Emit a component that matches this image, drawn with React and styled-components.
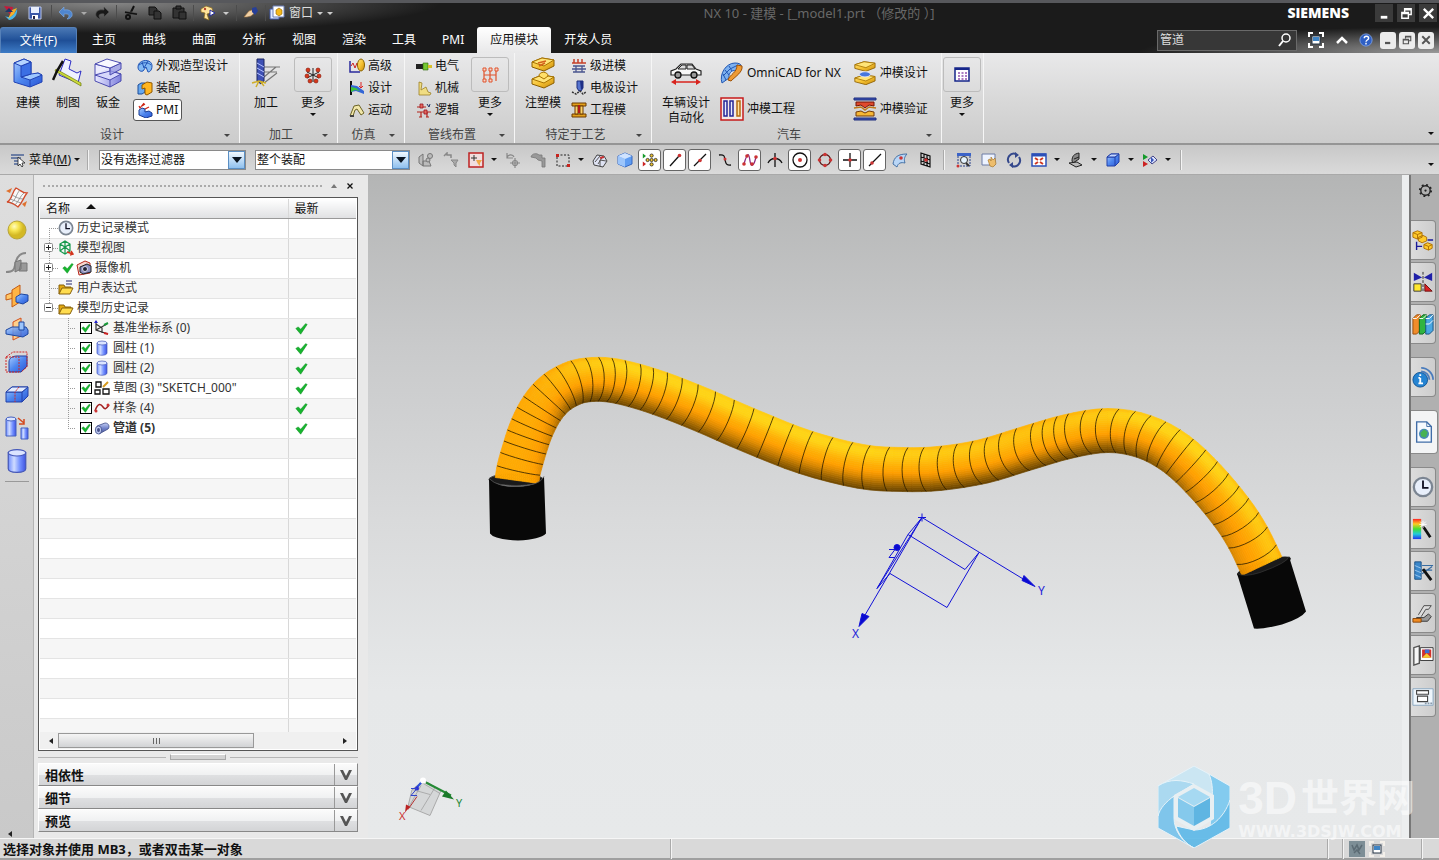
import React, { useState } from 'react';
import styled, { createGlobalStyle, css } from 'styled-components';

const GlobalStyle = createGlobalStyle`
  * {
    box-sizing: border-box;
  }

  body {
    margin: 0;
    font-family: 'Noto Sans', 'Noto Sans CJK SC', sans-serif;
    font-size: 12px;
    line-height: 16px;
    color: #111;
  }

  button, input, select {
    font: inherit;
    color: inherit;
  }
`;

const Page = styled.div`
  position: relative;
  display: flex;
  flex-direction: column;
  height: 100vh;
  overflow: hidden;
  background: #d6d6d6;
`;

const PlainButton = styled.button`
  display: flex;
  align-items: center;
  justify-content: center;
  padding: 0;
  border: none;
  background: none;
  white-space: nowrap;
`;

const Svg = styled.svg`
  display: block;
  flex: none;
`;

const Caret = styled.span`
  flex: none;
  width: 0;
  height: 0;
  border: 3px solid transparent;
  border-top-color: ${(p) => p.$color || '#111'};
  border-bottom-width: 0;
`;

/* Title bar and tabs */

const TopArea = styled.header`
  flex: none;
  color: #fff;
  border-top: 3px solid #57585c;
  background:
    radial-gradient(ellipse 330px 30px at 110px 0, #858585, transparent),
    radial-gradient(ellipse 300px 26px at 100% 100%, #9a9a9a, transparent),
    #1b1b1b;
`;

const TitleBar = styled.div`
  display: flex;
  align-items: center;
  height: 20px;
`;

const QuickAccess = styled.div`
  display: flex;
  align-items: center;
  flex: 7;
`;

const Slot = styled(PlainButton)`
  flex: none;
  width: ${(p) => p.$w || 22}px;
  height: 20px;
`;

const DarkRule = styled.span`
  width: 1px;
  height: 16px;
  margin: 0 3px;
  background: #4c4c4c;
`;

const WindowMenu = styled(PlainButton)`
  gap: 4px;
  color: #ddd;
`;

const AppTitle = styled.h1`
  margin: 0;
  font-size: 13px;
  font-weight: 400;
  color: #686868;
  white-space: pre;
`;

const TitleRight = styled.div`
  display: flex;
  align-items: center;
  justify-content: flex-end;
  flex: 5;
  gap: 4px;
  padding-right: 2px;
`;

const Brand = styled.strong`
  margin-right: 22px;
  font-family: 'Open Sans', sans-serif;
  font-size: 14px;
  font-weight: 800;
`;

const WindowButton = styled(PlainButton)`
  width: 18px;
  height: 18px;
  background: #3b3b3b;
`;

const TabBar = styled.nav`
  display: flex;
  align-items: flex-end;
  height: 30px;
`;

const Tab = styled(PlainButton)`
  height: 26px;
  padding: 0 13px;
  ${(p) => p.$active && css`
    color: #111;
    border-radius: 3px 3px 0 0;
    background: linear-gradient(#fff, #e8e8e9);
  `}
`;

const FileTab = styled(PlainButton)`
  width: 77px;
  height: 26px;
  margin-right: 2px;
  border: 1px solid #5580b8;
  border-bottom: none;
  border-radius: 3px 3px 0 0;
  background: linear-gradient(#4a78b4, #1f4f97 50%, #3e7cc6);
`;

const TabTools = styled.div`
  display: flex;
  align-items: center;
  height: 26px;
  margin-left: auto;
  padding-right: 5px;
`;

const SearchBox = styled.label`
  display: flex;
  align-items: center;
  width: 140px;
  height: 21px;
  margin-right: 6px;
  padding: 0 3px 0 2px;
  border: 1px solid #6a6a6a;
  background: #373737;
`;

const SearchInput = styled.input`
  flex: 1;
  min-width: 0;
  padding: 0;
  border: none;
  outline: none;
  color: #ddd;
  background: none;
`;

const DocButton = styled(PlainButton)`
  width: 16px;
  height: 17px;
  margin-left: 3px;
  border-radius: 3px;
  color: #555;
  background: #ececec;
`;

/* Ribbon */

const Ribbon = styled.section`
  display: flex;
  flex: none;
  height: 92px;
  border-bottom: 2px solid #959595;
  background: linear-gradient(#e9e9ea, #d9d9d9 50%, #cccccc);
`;

const Group = styled.div`
  display: flex;
  flex-direction: column;
  flex: none;
  width: ${(p) => p.$w}px;
  border-right: 1px solid #f6f6f6;
`;

const GroupBody = styled.div`
  display: flex;
  flex: 1;
  gap: ${(p) => p.$gap || 0}px;
  padding: 2px 0 0 ${(p) => p.$left || 8}px;
`;

const GroupFooter = styled.div`
  display: flex;
  align-items: center;
  height: 16px;
  padding-right: 9px;
  color: #444;
`;

const GroupTitle = styled.span`
  flex: 1;
  text-align: center;
`;

const BigButton = styled(PlainButton)`
  flex-direction: column;
  justify-content: flex-start;
  width: ${(p) => p.$w || 40}px;
  padding-top: 2px;
  gap: ${(p) => p.$gap || 6}px;
  align-self: flex-start;
  white-space: normal;
  line-height: 15px;
`;

const MoreFrame = styled.span`
  display: flex;
  align-items: center;
  justify-content: center;
  width: 38px;
  height: 35px;
  border: 1px solid #bcbcbc;
  border-radius: 3px;
`;

const SmallList = styled.div`
  display: flex;
  flex-direction: column;
  align-items: flex-start;
  justify-content: ${(p) => (p.$wide ? 'space-around' : 'flex-start')};
  margin-left: ${(p) => p.$left || 0}px;
`;

const SmallButton = styled(PlainButton)`
  height: 22px;
  gap: 3px;
  padding: 0 3px;
  border: 1px solid transparent;
  ${(p) => p.$pressed && css`
    border-color: #555;
    border-radius: 3px;
    background: #fff;
  `}
`;

/* Selection bar */

const SelectionBar = styled.section`
  display: flex;
  align-items: center;
  flex: none;
  height: 30px;
  padding-left: 10px;
  border-bottom: 1px solid #a9a9a9;
  background: linear-gradient(#c8c8c8, #dadada);
`;

const MenuButton = styled(PlainButton)`
  gap: 3px;
  width: 71px;
  justify-content: flex-start;
`;

const Rule = styled.span`
  flex: none;
  width: 2px;
  height: 20px;
  margin: 0 ${(p) => p.$gap || 6}px;
  border-left: 1px solid #aaa;
  background: #f4f4f4;
`;

const MenuRule = styled(Rule)`
  margin: 0 10px 0 6px;
`;

const SelectFrame = styled.span`
  position: relative;
  display: flex;
  flex: none;
  width: ${(p) => p.$w}px;
  height: 20px;
  margin-right: ${(p) => p.$right}px;
`;

const FilterSelect = styled.select`
  appearance: none;
  width: 100%;
  padding: 0 18px 0 1px;
  border: 1px solid #8a8a8a;
  background: #fff;
`;

const SelectArrow = styled.span`
  position: absolute;
  top: 1px;
  right: 1px;
  display: flex;
  align-items: center;
  justify-content: center;
  width: 17px;
  height: 18px;
  border: 1px solid #5b8fc4;
  background: linear-gradient(#f1f8fe, #8fc0ee);
  pointer-events: none;
`;

const ToolCell = styled(PlainButton)`
  flex: none;
  width: ${(p) => p.$w || 25}px;
  height: 24px;
`;

const ToolFrame = styled.span`
  display: flex;
  align-items: center;
  justify-content: center;
  width: 23px;
  height: 22px;
  ${(p) => p.$on && css`
    border: 1px solid #666;
    border-radius: 3px;
    background: #fff;
  `}
`;

const CornerCaret = styled.span`
  display: flex;
  align-items: flex-end;
  align-self: stretch;
  margin-left: auto;
  padding: 0 5px 8px 0;
`;

/* Work area */

const WorkArea = styled.main`
  display: flex;
  flex: 1;
  min-height: 0;
  background: #e9e9e9;
`;

const LeftTools = styled.aside`
  display: flex;
  flex-direction: column;
  flex: none;
  width: 34px;
  padding-top: 5px;
  border-right: 1px solid #b4b4b4;
  background: linear-gradient(#dedede, #c9c9c9);
`;

const LeftTool = styled(PlainButton)`
  height: 33px;
`;

const ToolEnd = styled.hr`
  width: 24px;
  margin: 4px auto;
  border: none;
  border-top: 1px solid #999;
`;

const CollapseMark = styled(PlainButton)`
  margin: auto 14px 0 0;
`;

const Navigator = styled.section`
  display: flex;
  flex-direction: column;
  flex: none;
  width: 334px;
  padding: 0 10px 6px 4px;
`;

const GripBar = styled.div`
  display: flex;
  align-items: center;
  gap: 9px;
  height: 22px;
  padding: 0 4px 0 5px;
`;

const Grip = styled.span`
  flex: 1;
  border-top: 2px dotted #aaa;
`;

const CollapseCaret = styled(Caret)`
  border-width: 0 3px 4px;
  border-bottom-color: #777;
`;

const TreeFrame = styled.div`
  display: flex;
  flex-direction: column;
  flex: 1;
  min-height: 0;
  padding: 1px;
  border: 1px solid #555;
  background: #fff;
`;

const TreeClip = styled.div`
  flex: 1;
  min-height: 0;
  overflow: hidden;
`;

const TreeTable = styled.table`
  width: 100%;
  table-layout: fixed;
  border-collapse: collapse;

  th {
    height: 19px;
    padding: 2px 6px 0;
    font-weight: 400;
    text-align: left;
    line-height: 14px;
    border-bottom: 1px solid #999;
    background: linear-gradient(#fff, #e0e1e3);
  }

  td {
    height: 20px;
    padding: 0;
    border-bottom: 1px solid #e4e4e4;
  }

  th + th, td + td {
    width: 68px;
    padding-left: 6px;
    border-left: 1px solid #d8d8d8;
  }

  tbody tr:nth-child(even) {
    background: #f6f6f6;
  }
`;

const SortMark = styled.span`
  display: inline-block;
  margin: 0 0 4px 16px;
  border: 5px solid transparent;
  border-top-width: 0;
  border-bottom-color: #111;
`;

const NodeLine = styled.label`
  display: flex;
  align-items: center;
  height: 19px;
  color: #333;
  white-space: nowrap;
  font-weight: ${(p) => (p.$bold ? 700 : 400)};
`;

const NodeText = styled.span`
  margin-left: 3px;
`;

const TickFrame = styled.span`
  position: relative;
  display: flex;
  flex: none;
  margin: 0 2px 0 4px;
`;

const NodeCheck = styled.input`
  appearance: none;
  width: 12px;
  height: 12px;
  margin: 0;
  border: 1px solid #000;
  background: #fff;
`;

const Tick = styled.span`
  position: absolute;
  top: 1px;
  left: 1px;
  pointer-events: none;
`;

const ScrollRow = styled.div`
  display: flex;
  align-items: center;
  flex: none;
  height: 17px;
  padding: 0 4px;
  background: #f0f0f0;
`;

const ScrollArrow = styled(PlainButton)`
  width: 14px;
`;

const ScrollTrack = styled.div`
  flex: 1;
`;

const ScrollThumb = styled.div`
  display: flex;
  align-items: center;
  justify-content: center;
  width: 70%;
  height: 15px;
  border: 1px solid #999;
  background: linear-gradient(#f5f5f5, #d2d3d5);
`;

const Splitter = styled.div`
  display: flex;
  align-items: center;
  gap: 4px;
  flex: none;
  height: 12px;

  &::before, &::after {
    content: '';
    flex: 1;
    border-top: 1px solid #b5b5b5;
  }
`;

const SplitterGrip = styled.span`
  width: 56px;
  height: 6px;
  border: 1px solid #a8a8a8;
  border-top-color: #fff;
  background: #d3d3d3;
`;

const Section = styled(PlainButton)`
  flex: none;
  justify-content: space-between;
  height: 23px;
  padding-left: 6px;
  border: 1px solid #fff;
  border-right-color: #888;
  border-bottom-color: #888;
  font-size: 13px;
  font-weight: 700;
  background: linear-gradient(#fbfbfb, #f0f1f2 50%, #dfe0e2 52%, #d3d4d6);
`;

const SectionArrow = styled.span`
  display: flex;
  align-items: center;
  justify-content: center;
  width: 23px;
  height: 21px;
  border-left: 1px solid #999;
`;

const Viewport = styled.section`
  display: flex;
  flex: 1;
  min-width: 0;
  border-right: 7px solid #eceeef;
  background: linear-gradient(#b4b5b5, #c9cacb 26%, #d9dadb 52%, #e6e8e9 78%, #e7e9ea);
`;

const Scene = styled.svg`
  display: block;
  flex: 1;
  min-width: 0;
  height: 100%;
`;

const ResourceBar = styled.aside`
  display: flex;
  flex-direction: column;
  align-items: flex-start;
  flex: none;
  gap: 2px;
  width: 30px;
  border-left: 2px solid #777;
  background: #b0b0b0;
`;

const GearButton = styled(PlainButton)`
  width: 28px;
  height: 30px;
  margin-bottom: 13px;
`;

const ResourceTab = styled(PlainButton)`
  width: ${(p) => (p.$active ? 27 : 25)}px;
  height: ${(p) => (p.$active ? 44 : 40)}px;
  margin-top: ${(p) => (p.$apart ? 11 : 0)}px;
  border: 1px solid #8a8a8a;
  border-left: none;
  border-radius: 0 4px 4px 0;
  background: ${(p) => (p.$active ? '#f3f4f5' : 'linear-gradient(90deg, #dcdcdc, #cdcdcd)')};
`;

const StatusBar = styled.footer`
  display: flex;
  align-items: center;
  flex: none;
  height: 22px;
  padding-left: 3px;
  border-top: 1px solid #f6f6f6;
  border-bottom: 2px solid #a0a0a0;
  background: #d9d9d9;
  font-size: 13px;
  font-weight: 700;
`;

const StatusText = styled.span`
  width: 46%;
  white-space: nowrap;
`;

const StatusRight = styled.div`
  display: flex;
  align-items: center;
  gap: 4px;
  margin-left: auto;
`;

const EndRule = styled(Rule)`
  margin: 0 16px 0 32px;
`;

const Watermark = styled.div`
  position: absolute;
  right: 24px;
  bottom: 12px;
  display: flex;
  align-items: center;
  gap: 8px;
  color: rgba(255, 255, 255, 0.55);
  font-weight: 700;
  pointer-events: none;
`;

const WatermarkName = styled.div`
  display: flex;
  align-items: center;
  height: 50px;
  gap: 4px;
  font-family: 'Liberation Sans', 'Noto Sans CJK SC', sans-serif;
  font-size: 38px;
  line-height: 40px;
`;

const WatermarkDigits = styled.span`
  font-size: 46px;
`;

const WatermarkUrl = styled.div`
  font-family: 'DejaVu Sans', sans-serif;
  font-size: 16px;
  line-height: 18px;
`;

/* Icons: [viewBox size, drawing] */

const check = <path d="M1 8l3-2 3 3 6-7 2 1-8 12z" fill="#17b52f" stroke="#0b8a1e" strokeWidth=".6" />;
const box = (
  <>
    <path d="M2 5l4-3h8v8l-4 4H2z" fill="url(#blue)" stroke="#2340a8" />
    <path d="M2 5h8v9M10 5l4-3" fill="none" stroke="#2340a8" />
    <path d="M2 5l4-3h8l-4 3z" fill="#c3d6ff" stroke="#2340a8" />
  </>
);
const cylinder = (
  <>
    <path d="M3 3v10c0 3 10 3 10 0V3z" fill="url(#cyl)" stroke="#4457b8" strokeWidth=".7" />
    <ellipse cx="8" cy="3" rx="5" ry="2" fill="#dbe4ff" stroke="#4457b8" strokeWidth=".7" />
  </>
);
const folder = (
  <>
    <path d="M1 14V5h5l1 2h6v2" fill="#e3a910" stroke="#86600a" />
    <path d="M1 14l3-6h11l-3 6z" fill="#ffdc4f" stroke="#86600a" />
  </>
);
const fullscreen = (c) => (
  <>
    <path d="M1 5V1h4M11 1h4v4M15 11v4h-4M5 15H1v-4" fill="none" stroke={c} strokeWidth="2" />
    <rect x="4" y="4" width="8" height="8" fill="#fff" stroke="#234" />
    <path d="M5 5h6v4H5z" fill="#3f84c4" />
  </>
);
const lshape = (
  <>
    <path d="M2 6l10-4 7 3v13l7-2 4 2v7L18 30 2 25z" fill="url(#blue)" stroke="#2142b4" />
    <path d="M9 20l10-3 7-1 4 2-12 5z" fill="#9cc6ff" stroke="#2142b4" />
    <path d="M9 9l10-4v12L9 20z" fill="#3b6fe4" stroke="#2142b4" />
    <path d="M2 6l10-4 7 3-10 4z" fill="#b4d4ff" stroke="#2142b4" />
    <path d="M18 23v7" stroke="#2142b4" />
  </>
);
const plate = (y) => (
  <>
    <path d={`M2 ${y + 4}l10-4 12 2v6l-10 5-12-4z`} fill="url(#gold)" stroke="#8b5e00" />
    <path d={`M2 ${y + 4}l12 4 10-6-12-2z`} fill="#ffe478" stroke="#a87300" />
  </>
);

const icons = {
  logo: [16, <><path d="M1 1l9 1-2 9z" fill="#c51a3b" /><path d="M2 11c5 3 9-1 12-7 1 5-3 11-8 11z" fill="#49b6e8" /><path d="M9 5l5-2-3 6-6 5z" fill="#f3b12a" /><path d="M2 7l4-4 4 4" fill="#1d3768" /></>],
  save: [16, <><path d="M2 2h12v12H2z" fill="#3a57a8" stroke="#b8c6ea" /><path d="M4 2h8v6H4z" fill="#e8eefc" /><path d="M5 10h6v4H5z" fill="#fff" /><path d="M6 11h2v3H6z" fill="#224" /></>],
  undo: [16, <path d="M1 7l5-5v3c6-1 9 2 8 6-1 2-3 3-5 3 3-2 3-6-3-5v3z" fill="#4f86cf" stroke="#85aee4" strokeWidth=".6" />],
  redo: [16, <path d="M15 7l-5-5v3C4 4 1 7 2 11c1 2 3 3 5 3-3-2-3-6 3-5v3z" fill="#191919" stroke="#555" strokeWidth=".6" />],
  cut: [16, <><path d="M11 1L7 9M2 7l12 2" stroke="#111" strokeWidth="2" /><circle cx="5" cy="12" r="2" fill="none" stroke="#111" strokeWidth="2" /><path d="M2 6l12 2" stroke="#777" strokeWidth=".5" /></>],
  copy: [16, <g fill="#333" stroke="#111"><path d="M2 2h6l2 2v6H2z" /><path d="M7 6h5l2 2v6H7z" /></g>],
  paste: [16, <g fill="#333" stroke="#111"><path d="M2 3h11v10H2z" /><path d="M5 1h5v3H5zM8 7h7v7H8z" /></g>],
  palette: [16, <><path d="M1 4l5-3 6 2 1 4-6 2 2 6-5-2 1-5-4-1z" fill="#ffe49a" stroke="#8b6b1d" strokeWidth=".7" /><path d="M10 5l5 3-5 3z" fill="#fff" stroke="#222a9c" /><circle cx="5" cy="4" r="1.2" fill="#b6442d" /></>],
  touch: [16, <><path d="M1 12l5-6 6-2 2 2-6 5-4 1z" fill="#f1d0a4" stroke="#9a6f3d" strokeWidth=".6" /><path d="M9 3l4-1 2 4-3 4-3-3z" fill="#273f98" /></>],
  windows: [16, <><path d="M1 4h9v10H1z" fill="#dbe7ff" stroke="#4059a8" /><path d="M4 1h11v11H4z" fill="#fff" stroke="#6a7eb8" /><path d="M7 5l3-2 3 2v4l-3 2-3-2z" fill="#f5b81c" stroke="#8b5e00" strokeWidth=".6" /></>],
  minimize: [16, <path d="M4 12h7" stroke="currentColor" strokeWidth="3" />],
  restore: [16, <path d="M6 6V3h7v6h-3M3 7h7v6H3zM3 8h7M6 4h7" fill="none" stroke="currentColor" strokeWidth="1.5" />],
  close: [16, <path d="M3 3l10 10M13 3L3 13" stroke="currentColor" strokeWidth="2.5" />],
  search: [16, <><circle cx="9" cy="6" r="4" fill="none" stroke="#fff" strokeWidth="1.5" /><path d="M6 9l-4 5" stroke="#fff" strokeWidth="2" /></>],
  fullscreen: [16, fullscreen('#fff')],
  fullscreenDark: [16, fullscreen('#f4f0ea')],
  chevron: [16, <path d="M3 11l5-5 5 5" fill="none" stroke="#fff" strokeWidth="2.5" />],
  help: [16, <><circle cx="8" cy="8" r="7" fill="#2e5fc4" stroke="#7da0e4" /><path d="M6 6c0-3 5-3 5 0 0 2-3 2-3 4M8 11v2" fill="none" stroke="#fff" strokeWidth="1.6" /></>],
  modeling: [32, lshape],
  drafting: [32, <><path d="M13 2l6 2-2 8 8 4 4-2-3 12-19-8z" fill="#eef2ff" stroke="#2a2ac4" /><path d="M4 12l25 14v3L3 14z" fill="#cddb3b" stroke="#6c7a0b" strokeWidth=".7" /><path d="M11 4L5 14l-4 9" fill="none" stroke="#111" strokeWidth="2.5" /></>],
  sheet: [32, <><path d="M3 18l12-5 14 4v7l-11 6-15-6z" fill="url(#violet)" stroke="#4b4bb0" /><path d="M3 18l12-5 14 4-11 6z" fill="#d6d7fb" stroke="#4b4bb0" /><path d="M18 23v7" stroke="#4b4bb0" /><path d="M3 7v11l15-4V11z" fill="#ececff" fillOpacity=".9" stroke="#4b4bb0" /><path d="M18 11v7l11-6V6z" fill="#9a9ce6" fillOpacity=".8" stroke="#4b4bb0" /><path d="M3 7l12-5 14 4-11 5z" fill="#f8f8ff" stroke="#4b4bb0" /></>],
  styling: [16, <><path d="M1 9c0-8 14-9 14-1 0 5-3 6-4 6l-2-5-3 4C3 14 1 12 1 9z" fill="#82b9f4" stroke="#2053b4" /><path d="M2 7c4-3 9-3 12 0M5 4l2 6 4-7" fill="none" stroke="#2053b4" /></>],
  assembly: [16, <><path d="M1 5l3-2h4v9l-3 2H1z" fill="#67a8ee" stroke="#1c4d99" /><path d="M5 5l5-3 5 1v9l-5 3-2-1V8L5 9z" fill="#ffb51f" stroke="#915800" /></>],
  pmi: [16, <><path d="M2 8l3-2 3 1v3l4-1 3 2v3l-6 2-7-3z" fill="url(#blue)" stroke="#173a93" /><path d="M2 4l1 2 4-5M5 4l3-2M8 7l4-2" stroke="#c21" strokeWidth="1.2" fill="none" /></>],
  machining: [32, <><path d="M14 10h16M14 15h13M14 20l12-10M14 26l13-10" stroke="#777" strokeWidth="1.2" /><path d="M7 2h7v22l-3 3-4-3z" fill="#3f51b5" stroke="#1c2660" /><path d="M7 6l7 4M7 11l7 4M7 16l7 4" stroke="#b8c4ff" /><path d="M2 26l7-2 7 2M9 24l-3 6M10 24l4 5" stroke="#cfae29" strokeWidth="1.5" /></>],
  moreRed: [24, <><path d="M12 5v14M6 9l12 6M18 9L6 15" stroke="#222" /><g fill="#d8371a" stroke="#7e1608" strokeWidth=".6"><circle cx="7" cy="7" r="2" /><circle cx="17" cy="7" r="2" /><circle cx="6" cy="13" r="2" /><circle cx="18" cy="13" r="2" /><circle cx="9" cy="18" r="2" /><circle cx="15" cy="18" r="2" /></g></>],
  moreRoute: [24, <><path d="M6 6v12M12 5v13M18 6v12M6 12h12" stroke="#e0532c" strokeWidth="1.2" /><g fill="#f6d8cc" stroke="#e0532c"><path d="M5 5h3v3H5zM11 5h3v3h-3zM17 5h3v3h-3zM5 16h3v3H5zM11 16h3v3h-3z" /></g></>],
  moreGrid: [24, <><path d="M5 5h14v13H5z" fill="#fff" stroke="#16268a" strokeWidth="1.5" /><path d="M5 6h14" stroke="#16268a" strokeWidth="2" /><path d="M8 10h9M8 13h9M8 16h9" stroke="#9152ae" strokeWidth="1.5" strokeDasharray="2 1.5" /></>],
  simAdvanced: [16, <><path d="M1 3v11h10" stroke="#2a2a9c" fill="none" strokeWidth="1.5" /><path d="M2 8l2-3 2 5 2-5 2 4" fill="none" stroke="#c22" /><ellipse cx="12" cy="7" rx="3.5" ry="6" fill="url(#gold)" stroke="#8b6500" /></>],
  simDesign: [16, <><path d="M2 1v14" stroke="#111" strokeWidth="2" /><path d="M2 5l6 1 7 5v3l-8-3-5 1z" fill="#3366d6" /><path d="M2 7l5 1 4 3-5-1-4 2z" fill="#3cc43c" /><path d="M12 2v6M10 6l2 2 2-2" stroke="#d22" fill="none" /></>],
  simMotion: [16, <><path d="M1 14L5 4l5-1 5 8-3 2-4-6-2 1-2 6z" fill="#f1e7a9" stroke="#6d6427" /><path d="M1 14h4" stroke="#444" strokeWidth="2" /></>],
  electric: [16, <><path d="M0 6h8v5H0z" fill="#222" /><path d="M7 5h5v7H7z" fill="#75c832" stroke="#2b6607" strokeWidth=".6" /><path d="M12 7h4v3h-4z" fill="#d9c22b" /></>],
  mechanical: [16, <path d="M3 2l3 1-1 7 5-3 2 5 3 1-1 2H3z" fill="#f0dd83" stroke="#9c8226" strokeWidth=".8" />],
  logic: [16, <><path d="M1 5h9M1 10h14M5 10v5M11 10v5M3 15h3M10 15h3" stroke="#b4251b" strokeWidth="1.2" /><path d="M4 2h3v4H4zM8 8h3v4H8z" fill="#e46a5e" stroke="#912" strokeWidth=".8" /><path d="M11 2l2 3 1-3" fill="none" stroke="#236" /></>],
  mold: [32, <><g transform="translate(3)">{plate(1)}{plate(18)}<path d="M9 19c0-5 9-5 9 0l-4 3z" fill="#ffdf69" stroke="#a87300" /><path d="M8 6l8-2M9 9l6-3" stroke="#d4611d" strokeWidth="1.5" /></g></>],
  progressive: [16, <><path d="M1 5h14M3 1v4M7 1v4M11 1v4" stroke="#c5402a" strokeWidth="1.5" /><path d="M2 8h12M1 11h14M2 14h12M5 8v6M11 8v6" stroke="#4a558f" strokeWidth="1.3" /></>],
  electrode: [16, <><path d="M6 1h6v7l-2 3H8L6 8z" fill="#5674cf" stroke="#1c2c7c" /><path d="M9 1h3v7l-2 2z" fill="#1e2f86" /><path d="M1 12l4 2 4-3 3 3 3-2" fill="none" stroke="#333" strokeWidth="1.5" strokeDasharray="2 1" /></>],
  engDie: [16, <><path d="M1 1h14v3H1zM1 12h14v3H1z" fill="#e2a01b" stroke="#6d3b00" /><path d="M4 4h3v8H4zM9 4h3v8H9z" fill="#fbd36a" stroke="#6d3b00" /><path d="M8 3v8" stroke="#b21818" strokeWidth="2" /></>],
  car: [32, <><path d="M1 18v-4l5-2 5-5h11l4 5 5 2v4z" fill="#f8f8f8" stroke="#222" strokeWidth="1.2" /><path d="M8 12l4-4h4v4zM17 8h5l3 4h-8z" fill="#dcdcdc" stroke="#222" /><circle cx="8" cy="18" r="3" fill="#999" stroke="#111" strokeWidth="1.3" /><circle cx="24" cy="18" r="3" fill="#999" stroke="#111" strokeWidth="1.3" /><path d="M3 25h26" stroke="#d8231d" strokeWidth="1.5" /><path d="M1 25l5-3v6zM31 25l-5-3v6z" fill="#d8231d" /></>],
  omnicad: [24, <><path d="M2 22C-1 13 6 2 15 2s7 6 3 9c-5-4-10 1-9 6z" fill="#7eb1ef" stroke="#2157b3" /><path d="M3 15l7-7 8-4M6 19l-3-6M9 14L5 9M12 10L9 5" stroke="#2157b3" fill="none" /><path d="M17 4l5 1c1 6-6 10-11 15l-3-1c2-6 9-7 9-15z" fill="#ee9b34" stroke="#9f5105" /></>],
  dieEng: [24, <><path d="M1 1h22v22H1z" fill="#f5e9e5" stroke="#c61b1b" strokeWidth="1.5" /><path d="M4 4h3v15H4zM10 4h3v15h-3z" fill="#e8edff" stroke="#252595" strokeWidth="1.5" /><path d="M17 4h3v15h-3z" fill="#ffe19c" stroke="#b36b11" strokeWidth="1.5" /></>],
  dieDesign: [24, <g transform="scale(.92 .74)">{plate(1)}{plate(19)}<ellipse cx="13" cy="18" rx="6" ry="3.5" fill="#4777dd" stroke="#efefff" /></g>],
  dieCheck: [24, <><path d="M1 1h22v2H1zM1 21h22v2H1z" fill="#3e55b8" stroke="#1c2c7c" /><path d="M3 5h18v4l-5-1-4 3-4-3-5 1z" fill="#e04a2c" stroke="#721408" /><path d="M3 19h18v-4l-5-1-4 2-4-2-5 1z" fill="#f5b736" stroke="#723a08" /><path d="M1 11l7-1 4 3 4-3 7 1" fill="none" stroke="#c07a1a" strokeWidth="1.5" /></>],
  menu: [16, <><path d="M1 3h13M1 6h10M4 9h5M4 12h5" stroke="#4c6496" strokeWidth="1.5" /><path d="M8 5v9l2-2 2 3 1-1-1-3h3z" fill="#fff" stroke="#222" strokeWidth=".8" /></>],
  find: [16, <g fill="#bbb" stroke="#777"><path d="M1 5l4-3v12l-4-3zM5 9h6l2 5H5z" /><circle cx="12" cy="4" r="2.5" /><circle cx="10" cy="8" r="2" /></g>],
  filterReset: [16, <g fill="#aaa" stroke="#888"><path d="M1 4l3-3v2h4v3" fill="none" strokeWidth="1.5" /><path d="M8 8h7l-2 3v4l-2-2v-2z" /></g>],
  filterPick: [16, <><path d="M1 1h14v14H1z" fill="#f1dede" stroke="#bd2222" strokeWidth="1.5" /><path d="M6 3v6M3 6h6" stroke="#333" /><path d="M8 8h6l-2 3v3l-2-2z" fill="#f0ab45" /></>],
  pointGray: [16, <g fill="none" stroke="#888" strokeWidth="1.2"><path d="M2 1v5h6M2 6c1-4 6-4 7-1" /><circle cx="10" cy="11" r="2.5" /><path d="M10 6v10M5 11h10" /></g>],
  handGray: [16, <path d="M1 5c1-4 6-4 8-2h3v3h3v9h-3V9L8 8 6 6z" fill="#999" stroke="#777" strokeWidth=".8" />],
  marquee: [16, <><path d="M2 3h12v11H2z" fill="none" stroke="#222" strokeDasharray="2 1.5" /><path d="M1 2h3v3H1zM12 12h3v3h-3z" fill="#c8231d" /></>],
  shaded: [16, <><path d="M1 9l4-6 7 1 3 5-4 6-9-2z" fill="#dfe3f3" stroke="#444" /><path d="M3 10l5-6M6 12l5-8M8 14V8l6 1" fill="none" stroke="#555" /><path d="M8 6l4-1" stroke="#c33" strokeWidth="2" /></>],
  cube: [16, <><path d="M1 4l7-3 7 3v8l-7 3-7-3z" fill="#5e9cf2" stroke="#3567c0" /><path d="M1 4l7 3v8l-7-3z" fill="#9cc5fb" /><path d="M1 4l7-3 7 3-7 3z" fill="#cfe3ff" /></>],
  snapAll: [20, <><path d="M1 2l4 3-4 3z" fill="#159a2b" /><path d="M1 12l4 3-4 3z" fill="#c22" /><g fill="#f0c430" stroke="#222"><circle cx="12" cy="4.5" r="2" /><circle cx="12" cy="15.5" r="2" /><circle cx="7" cy="10" r="2" /><circle cx="17" cy="10" r="2" /><circle cx="12" cy="10" r="2" /></g></>],
  snapEnd: [16, <><path d="M3 14L12 4" stroke="#111" strokeWidth="1.3" /><circle cx="12.5" cy="3.5" r="1.8" fill="#c33" /></>],
  snapMid: [16, <><path d="M2 14L14 2" stroke="#111" strokeWidth="1.3" /><circle cx="8" cy="8.5" r="1.8" fill="#c33" /></>],
  snapTangent: [16, <><path d="M2 3c7-1 5 3 6 5s0 6 6 5" fill="none" stroke="#111" strokeWidth="1.3" /><circle cx="8" cy="7" r="1.5" fill="#c33" /></>],
  snapPole: [16, <><path d="M2 12c4-14 5-10 6-3s4 5 6-4" fill="none" stroke="#8e2a80" strokeWidth="1.3" /><g fill="#c33"><circle cx="2" cy="12" r="1.8" /><circle cx="5" cy="4" r="1.8" /><circle cx="10" cy="12" r="1.8" /><circle cx="14" cy="5" r="1.8" /></g></>],
  snapCross: [16, <><path d="M8 1v14M1 11c3-6 11-6 14 0" fill="none" stroke="#111" strokeWidth="1.3" /><circle cx="8" cy="6.5" r="1.8" fill="#c33" /></>],
  snapCenter: [16, <><circle cx="8" cy="8" r="7" fill="none" stroke="#111" strokeWidth="1.3" /><circle cx="8" cy="8" r="2" fill="#c33" /></>],
  snapQuad: [16, <><circle cx="8" cy="8" r="5.5" fill="none" stroke="#511" strokeWidth="1.3" /><g fill="#c33"><circle cx="8" cy="2.5" r="1.8" /><circle cx="8" cy="13.5" r="1.8" /><circle cx="2.5" cy="8" r="1.8" /><circle cx="13.5" cy="8" r="1.8" /></g></>],
  snapPoint: [16, <><path d="M8 1v14M1 8h14" stroke="#111" strokeWidth="1.3" /><circle cx="8" cy="8" r="1.8" fill="#c33" /></>],
  snapCurve: [16, <><path d="M2 14L14 2" stroke="#111" strokeWidth="1.3" /><circle cx="5" cy="11" r="1.8" fill="#c33" /></>],
  snapFace: [16, <><path d="M1 12C2 5 6 2 15 2c-3 3-3 6-2 9-4-1-7 0-8 4z" fill="#b9d6f6" stroke="#4571a5" /><circle cx="9" cy="6" r="1.8" fill="#c33" /></>],
  snapGrid: [16, <><path d="M4 1l9 3v11l-9-3zM7 2v11M10 3v11M4 5l9 3M4 9l9 3" fill="none" stroke="#111" strokeWidth="1.2" /><circle cx="9" cy="8" r="1.8" fill="#c33" /></>],
  zoomFit: [16, <><path d="M1 1h14v3H1z" fill="#3b63c8" /><path d="M2 4v10h12V4" fill="none" stroke="#26418c" strokeDasharray="2 1" /><circle cx="8" cy="8" r="3.5" fill="#e4f3ff" stroke="#333" /><path d="M10 11l3 3" stroke="#333" strokeWidth="2" /><circle cx="2" cy="14" r="1.5" fill="#c33" /></>],
  pan: [16, <><path d="M1 2h13v11H1z" fill="#edf3ff" stroke="#6c7da5" /><path d="M7 8l2-1 1 2V5l2 3 2-2 1 6-3 3-3-1z" fill="#edbd6c" stroke="#9d6d1d" strokeWidth=".6" /></>],
  rotate: [16, <><path d="M3 11A6 6 0 0 1 10 2M13 5A6 6 0 0 1 6 14" fill="none" stroke="#34488c" strokeWidth="2" /><path d="M9 0l4 3-4 3zM7 10l-4 3 4 3z" fill="#34488c" /></>],
  fit: [16, <><path d="M1 2h14v12H1z" fill="#fff" stroke="#2c50b8" strokeWidth="1.5" /><path d="M1 3h14" stroke="#2c50b8" strokeWidth="3" /><path d="M4 6l3 2M12 6L9 8M4 12l3-2M12 12l-3-2" stroke="#cf3821" strokeWidth="2" /></>],
  orient: [16, <><path d="M4 9c0-5 2-7 7-8v6l-6 4z" fill="#888" stroke="#222" /><path d="M1 11l7 4 6-2-5-3z" fill="#bbb" stroke="#222" /><path d="M6 7l5-2" stroke="#222" /></>],
  box: [16, box],
  section: [16, <><path d="M1 2l5 3-5 3z" fill="#159a2b" /><path d="M1 9l5 3-5 3z" fill="#c22" /><path d="M6 8l5-4 4 4-5 4z" fill="#dde5ff" stroke="#448" /><path d="M9 5l3 3-3 3z" fill="#3a57b8" /></>],
  surface: [24, <><path d="M2 17C8 14 6 8 11 3c4 2 6 5 11 5-4 5-4 9-9 14-3-2-6-5-11-5z" fill="#f8f8f8" stroke="#d24a2a" strokeWidth="1.3" /><path d="M6 18c5-3 5-9 9-13M10 20c4-4 5-9 9-12M7 10c4 2 7 4 11 4M5 14c4 1 7 3 11 4" fill="none" stroke="#888" strokeWidth=".8" /><path d="M1 6l6-3-2 5zM22 16l-2 6-3-3z" fill="#e0702d" /></>],
  sphere: [24, <circle cx="12" cy="12" r="9" fill="url(#ball)" stroke="#b8a53a" />],
  sweep: [24, <><path d="M1 21c10 0 8-5 10-11S16 2 21 2" fill="none" stroke="#888" strokeWidth="2" /><path d="M10 11l6-2v9l-6 3zM16 12h6v8h-8z" fill="#999" stroke="#777" /></>],
  plane: [24, <><path d="M1 11l8-3v6l-8 2z" fill="#ffc766" stroke="#c35b14" /><path d="M7 6l8-5v17l-8 5z" fill="#ffb445" stroke="#c35b14" /><path d="M11 13l5-3 7 1v6l-5 3-7-2z" fill="url(#blue)" stroke="#1d47a0" /></>],
  datum: [24, <><path d="M8 5l8-4v18l-8 4z" fill="#ffd08b" stroke="#d2501d" /><path d="M1 13l6-3h14l2 3v4l-5 3-17-3z" fill="url(#blue)" fillOpacity=".85" stroke="#1d47a0" /><path d="M14 5h5v8h-5z" fill="#9cc5fb" stroke="#1d47a0" /></>],
  trim: [24, <><path d="M4 12c0-4 4-6 8-6h10v10l-6 6H4z" fill="url(#blue)" stroke="#223fa0" /><path d="M1 7l7-5h14v15l-6 5M1 7h13v15H1z" fill="none" stroke="#cf2a2a" strokeDasharray="2 1" /></>],
  block: [24, <><path d="M1 9l6-5h16v9l-6 6H1z" fill="url(#blue)" stroke="#2340a8" /><path d="M1 9h16v10M17 9l6-5" fill="none" stroke="#2340a8" /><path d="M1 9l6-5h16l-6 5z" fill="#e1ebff" stroke="#2340a8" /><path d="M14 4l-4 5v10" fill="none" stroke="#cf2a2a" strokeDasharray="2 1" /></>],
  pattern: [24, <><path d="M1 3h10v17H1z" fill="url(#cyl)" stroke="#4460c0" /><ellipse cx="6" cy="3" rx="5" ry="2" fill="#dbe4ff" stroke="#4460c0" /><path d="M16 12h7v11h-7z" fill="url(#cyl)" stroke="#4460c0" /><path d="M13 2l6 5M19 3v5h-5" stroke="#d4481d" strokeWidth="1.5" fill="none" /></>],
  cylinderBig: [24, <g transform="translate(-2 -1) scale(1.75 1.6)">{cylinder}</g>],
  clock: [24, <><circle cx="12" cy="12" r="10" fill="#e8effb" stroke="#7b8592" strokeWidth="2.5" /><path d="M12 5v8h6" fill="none" stroke="#112" strokeWidth="2" /></>],
  views: [16, <><path d="M2 4l5-3 5 3v7l-5 3-5-3zM2 4l5 3 5-3M7 7v7M7 1v6l-5 4M7 7l5 4" fill="none" stroke="#169a4e" strokeWidth="1.2" /><path d="M9 12l6 2M12 15l3-1-2-3" stroke="#d3331b" fill="none" strokeWidth="1.5" /></>],
  check: [16, check],
  camera: [16, <><path d="M1 5l8-4 5 2v10l-11 2z" fill="#f7d5cf" stroke="#b8281d" /><path d="M4 7l7-3 4 2v6l-8 2-3-2z" fill="#8a8ec0" stroke="#222" /><circle cx="9" cy="9" r="2.5" fill="#223" stroke="#dde" /></>],
  folderEq: [16, <>{folder}<path d="M8 1h6M8 4h6" stroke="#22266f" strokeWidth="1.2" /></>],
  folder: [16, folder],
  csys: [16, <><path d="M2 1v9l12 4M2 10l11-6M2 4l6 4v5" fill="none" stroke="#333" strokeWidth="1.2" /><path d="M0 3l2-3 2 3z" fill="#22c" /><path d="M10 5l4-2" stroke="#1a9a3b" strokeWidth="2" /><path d="M10 13l4 1" stroke="#c22" strokeWidth="2" /></>],
  cylinder: [16, cylinder],
  sketch: [16, <><path d="M2 2h5v5H2zM1 10h5v4H1zM9 9h6v5H9z" fill="#fff" stroke="#111" strokeWidth="1.3" /><path d="M14 2l-5 5" stroke="#d69a1d" strokeWidth="2" /></>],
  spline: [16, <><path d="M1 11C4 2 7 4 9 7s3 2 6-2" fill="none" stroke="#a12020" strokeWidth="1.5" /><circle cx="2" cy="11" r="1.5" fill="#c33" /><circle cx="14" cy="5" r="1.5" fill="#c33" /></>],
  tube: [16, <><path d="M3 6l8-3c4 0 5 4 3 6l-9 5z" fill="url(#steel)" stroke="#3c4a87" strokeWidth=".8" /><ellipse cx="4.5" cy="10" rx="3.2" ry="4" fill="#bdc8ee" stroke="#3c4a87" strokeWidth=".8" /><ellipse cx="4.5" cy="10" rx="1.5" ry="2" fill="#46508a" /></>],
  gear: [16, <><circle cx="8" cy="8" r="5" fill="none" stroke="#222" strokeWidth="1.5" /><circle cx="8" cy="8" r="6" fill="none" stroke="#222" strokeWidth="2" strokeDasharray="2 2.7" /><circle cx="8" cy="8" r="1.2" fill="#222" /></>],
  navAssembly: [24, <><path d="M1 4l5-2 5 2v5l-5 2-5-2zM7 9l5-2 4 2v4l-5 2-4-2zM13 17l4-2 5 2v4l-4 2-5-2z" fill="#ffca2c" stroke="#ad6d00" /><path d="M1 4l5 2 5-2M6 6v5M13 17l5 2 4-2M18 19v4" fill="none" stroke="#ad6d00" /><path d="M5 14v9M5 19h6M17 12h6" stroke="#1a1a9a" strokeWidth="1.5" /></>],
  constraint: [24, <><path d="M2 2l9 5-9 4zM22 2l-9 5 9 4z" fill="#2020a8" /><path d="M12 1v22" stroke="#222" strokeDasharray="3 1.5" /><path d="M2 14h8v8H2z" fill="#ffe72e" stroke="#333" /><path d="M14 14l8 8h-8z" fill="#d22" stroke="#611" /></>],
  books: [24, <><path d="M1 6l4-4h4v17l-4 4H1z" fill="#f08c2b" stroke="#93480a" /><path d="M8 6l4-4h4v17l-4 4H8z" fill="#31b441" stroke="#0d631a" /><path d="M15 6l4-4h4v17l-4 4h-4z" fill="#4aa7e2" stroke="#124f7f" /><path d="M1 6h4l4-4M8 6h4l4-4M15 6h4l4-4M15 12h4l4-4" fill="none" stroke="#fff" /></>],
  info: [24, <><circle cx="9" cy="15" r="8" fill="#2584d2" stroke="#105393" /><path d="M9 9v2M9 13v6M7 13h2M7 19h5" stroke="#fff" strokeWidth="2" /><path d="M10 2c7 0 13 6 13 13M10 6c5 0 9 4 9 9" fill="none" stroke="#4a7cbc" strokeWidth="2" /></>],
  page: [24, <><path d="M4 1h11l5 5v17H4z" fill="#f6fafe" stroke="#416da8" strokeWidth="1.5" /><path d="M15 1v5h5" fill="none" stroke="#416da8" /><circle cx="12" cy="14" r="5.5" fill="#4a89b8" /><path d="M8 13l4-4 4 3-2 6-5-1z" fill="#47b254" /></>],
  spectrum: [24, <><path d="M1 1h9v22H1z" fill="url(#rainbow)" /><path d="M12 9l8 12" stroke="#111" strokeWidth="3" /><path d="M12 3v8M8 7h8M9 4l6 6M15 4l-6 6" stroke="#fff" /></>],
  process: [24, <><path d="M3 2h7v19H3z" fill="#3a87ca" stroke="#1b4f83" /><path d="M3 6l7 3M3 11l7 3M3 16l7 3" stroke="#9cc8f0" /><path d="M11 6h12M11 11h11M11 15l11-8" stroke="#376ca2" strokeWidth="1.3" /><path d="M12 10l9 12" stroke="#111" strokeWidth="3" /></>],
  robot: [24, <><path d="M7 14l6-10h8l-3 4h-3l-5 8" fill="#ddd" stroke="#444" /><path d="M5 17h8l5-4 3 3-4 5H5z" fill="#999" stroke="#333" /><path d="M1 18h9v4H1z" fill="#f08b21" stroke="#86440a" /></>],
  gallery: [24, <><path d="M2 4l6-2v19l-6 2z" fill="#f7f7f7" stroke="#555" strokeWidth="1.5" /><path d="M9 4h14v14H9z" fill="#fff" stroke="#333" /><path d="M11 6h10v9H11z" fill="#d2312c" /><path d="M14 6h5v4h-5z" fill="#3a6fd1" /><path d="M11 15l5-5 5 5z" fill="#f5cc2e" /></>],
  form: [24, <><path d="M1 3h22v18H1z" fill="#eef5fb" stroke="#87a5bf" /><path d="M5 5h13v4H5zM6 11h11v6H6z" fill="#fff" stroke="#444" strokeWidth="1.2" /><path d="M14 19h8" stroke="#89a" strokeWidth="2" strokeDasharray="2 1" /></>],
  down: [16, <path d="M2 3h3l3 6 3-6h3L9 13H7z" fill="#555" />],
  dropDown: [12, <path d="M1 3h10l-5 6z" fill="#0a1420" />],
  arrowLeft: [8, <path d="M6 1v6L2 4z" fill="#222" />],
  arrowRight: [8, <path d="M2 1v6l4-3z" fill="#222" />],
  thumbGrip: [8, <path d="M1.500 1v6M4.500 1v6M7.500 1v6" stroke="#666" />],
  hex: [16, <><path d="M0 0h16v16H0z" fill="#7d8e96" /><path d="M3 4l2 5 3-5 2 5 3-5M5 12l3-3 3 4" fill="none" stroke="#5c6b74" strokeWidth="1.5" /></>],
};

function Icon({ name, size = 16 }) {
  const [side, drawing] = icons[name];
  return (
    <Svg width={size} height={size} viewBox={`0 0 ${side} ${side}`} fill="none" aria-hidden="true">
      {drawing}
    </Svg>
  );
}

const Gradient = ({ id, stops, x2 = 1, y2 = 0 }) => (
  <linearGradient id={id} x2={x2} y2={y2}>
    {stops.map((color, i) => (
      <stop key={i} offset={i / (stops.length - 1)} stopColor={color} />
    ))}
  </linearGradient>
);

const HiddenSvg = styled.svg`
  position: absolute;
`;

function SharedDefs() {
  return (
    <HiddenSvg width="0" height="0" aria-hidden="true">
      <defs>
        <Gradient id="blue" stops={['#a9ccff', '#4d86ee', '#2a56d6']} y2={1} />
        <Gradient id="gold" stops={['#ffe27a', '#f6c233', '#c78a0b']} y2={1} />
        <Gradient id="violet" stops={['#e9e9ff', '#7d7fdc']} />
        <Gradient id="steel" stops={['#c4cff5', '#6f80c8', '#4a5692']} x2={0} y2={1} />
        <Gradient id="cyl" stops={['#6f8dff', '#cfdcff', '#7390ff', '#3f54e0']} />
        <Gradient id="rainbow" stops={['#f22', '#fc2', '#4d3', '#2cd', '#23e']} x2={0} y2={1} />
        <radialGradient id="ball" cx=".35" cy=".3">
          <stop offset="0" stopColor="#fffcc0" />
          <stop offset=".5" stopColor="#f6e450" />
          <stop offset="1" stopColor="#d3b824" />
        </radialGradient>
      </defs>
    </HiddenSvg>
  );
}

/* 3D scene */

const PIPE_RADIUS = 22;

const pipePoints = [
  [517, 480], [519, 468], [525, 447], [532, 427], [542, 408], [554, 394], [568, 385], [583, 380],
  [604, 379], [627, 383], [660, 393], [701, 409], [752, 431], [806, 452], [861, 466], [903, 469],
  [939, 468], [983, 461], [1023, 449], [1068, 436], [1108, 430], [1144, 436], [1176, 453],
  [1205, 480], [1231, 511], [1248, 537], [1263, 568],
];

// [x of the centre line, value] pairs
const ringGaps = [[518, 10], [600, 10], [630, 11], [700, 16], [752, 19], [850, 18], [900, 16], [980, 14], [1040, 12], [1100, 10], [1150, 10], [1200, 12], [1262, 15]];
const ringBulges = [[518, -1], [550, 0], [570, 3], [600, 6], [650, 4], [720, 3], [770, 0], [830, -3], [880, -5], [1000, -8], [1100, -8], [1150, -5], [1175, -1], [1210, 3], [1262, 5]];

function lookup(table, x) {
  const i = table.findIndex(([tx]) => tx > x);
  if (i === 0) return table[0][1];
  if (i < 0) return table[table.length - 1][1];
  const [x0, v0] = table[i - 1];
  const [x1, v1] = table[i];
  return v0 + ((v1 - v0) * (x - x0)) / (x1 - x0);
}

function samplePipe() {
  const samples = [];
  const at = (i) => pipePoints[Math.max(0, Math.min(pipePoints.length - 1, i))];
  const steps = 8;
  for (let i = 0; i < pipePoints.length - 1; i++) {
    for (let s = 0; s < steps; s++) {
      const t = s / steps;
      const [a, b, c, d] = [at(i - 1), at(i), at(i + 1), at(i + 2)];
      const pos = [0, 1].map((k) => 0.5 * (2 * b[k] + (c[k] - a[k]) * t + (2 * a[k] - 5 * b[k] + 4 * c[k] - d[k]) * t * t + (3 * b[k] - a[k] - 3 * c[k] + d[k]) * t * t * t));
      samples.push({ x: pos[0], y: pos[1] });
    }
  }
  return samples.map((p, i) => {
    const q0 = samples[Math.max(0, i - 5)];
    const q1 = samples[Math.min(samples.length - 1, i + 5)];
    const len = Math.hypot(q1.x - q0.x, q1.y - q0.y);
    const tx = (q1.x - q0.x) / len;
    const ty = (q1.y - q0.y) / len;
    return { ...p, tx, ty, nx: ty, ny: -tx };
  });
}

const ramp = [[0, [70, 46, 0]], [0.3, [150, 96, 0]], [0.5, [222, 138, 0]], [0.64, [255, 158, 0]], [0.78, [255, 172, 4]], [1, [255, 214, 22]]];

function shade(nx, up, nz) {
  let light = 0.57 + 0.12 * nz + (up > 0 ? 0.08 : 0.5) * up + 0.12 * Math.max(0, -nx);
  light += 0.32 * Math.max(0, nx * 0.42 + up * 0.72 + nz * 0.56) ** 3;
  light = Math.max(0, Math.min(0.99, light));
  const i = ramp.findIndex(([v]) => v > light);
  const [v0, c0] = ramp[i - 1];
  const [v1, c1] = ramp[i];
  const rgb = c0.map((c, k) => Math.round(c + ((c1[k] - c) * (light - v0)) / (v1 - v0)));
  return `rgb(${rgb.join(',')})`;
}

const samples = samplePipe();
const offset = (p, d) => `${(p.x + p.nx * d).toFixed(1)} ${(p.y + p.ny * d).toFixed(1)}`;

function buildFacets() {
  const facets = [];
  const bands = 22;
  const width = (2 * PIPE_RADIUS) / bands;
  for (let i = 0; i < samples.length - 1; i += 2) {
    const p = samples[i];
    const q = samples[Math.min(samples.length - 1, i + 2)];
    for (let b = 0; b < bands; b++) {
      const d0 = -PIPE_RADIUS + b * width;
      const d1 = d0 + width;
      const s = (d0 + d1) / 2 / PIPE_RADIUS;
      facets.push({
        d: `M${offset(p, d0)}L${offset(q, d0)}L${offset(q, d1)}L${offset(p, d1)}z`,
        color: shade(p.nx * s, -p.ny * s, Math.sqrt(1 - s * s)),
      });
    }
  }
  return facets;
}

function buildRings() {
  const rings = [];
  let run = 0;
  for (let i = 1; i < samples.length - 3; i++) {
    const p = samples[i];
    run += Math.hypot(p.x - samples[i - 1].x, p.y - samples[i - 1].y);
    if (run < lookup(ringGaps, p.x)) continue;
    run = 0;
    const b = lookup(ringBulges, p.x) * 1.33;
    const control = (d) => offset({ ...p, x: p.x + p.tx * b, y: p.y + p.ty * b }, d);
    rings.push(`M${offset(p, PIPE_RADIUS)}C${control(12)} ${control(-12)} ${offset(p, -PIPE_RADIUS)}`);
  }
  return rings;
}

const facets = buildFacets();
const rings = buildRings();

function ModelScene() {
  return (
    <Scene viewBox="368 175 1034 662" role="img" aria-label="管道模型">
      <ellipse cx="516" cy="479" rx="27" ry="6" fill="#1a1a1a" stroke="#444" />
      <ellipse cx="1264" cy="566" rx="28" ry="6" transform="rotate(-17 1264 566)" fill="#1a1a1a" />
      {facets.map((f, i) => (
        <path key={i} d={f.d} fill={f.color} stroke={f.color} strokeWidth=".7" />
      ))}
      {rings.map((d) => (
        <path key={d} d={d} fill="none" stroke="#2a1c00" strokeWidth=".8" />
      ))}
      <path d="M489 478Q498 487 518 486Q540 485 544 476L546 533Q540 539 518 540Q494 539 490 533z" fill="#080808" />
      <path d="M489 478Q498 487 518 486Q540 485 544 476" fill="none" stroke="#555" strokeWidth=".8" />
      <path d="M1237 573Q1244 577 1260 572Q1288 562 1289 556L1306 611Q1301 618 1282 624Q1262 629 1254 628z" fill="#080808" />
      <path d="M1237 573Q1244 577 1260 572Q1288 562 1289 556" fill="none" stroke="#333" strokeWidth=".8" />
      <g fill="none" stroke="#1212d8">
        <path d="M922 517L1024 579M922 517L863 618M908 534l57 35 14-17-32 55-57-34-13 15 31-54 14-17-45 71M918 517h8M922 513v8" />
        <path d="M1022 580l2-5 11 11zM862 613l7 3-10 10z" fill="#0a0ad0" />
        <circle cx="897" cy="547" r="3" fill="#0a0ad0" />
        <path d="M889 549h6l-6 8h6" />
      </g>
      <g fill="#2424d8" fontSize="12">
        <text x="1038" y="594">Y</text>
        <text x="852" y="637">X</text>
      </g>
      <path d="M412 789l12-9 17 10-11 25-22-9z" fill="#d5d7d8" stroke="#aaa" />
      <path d="M421 785l-13 23M420 781l20 12M412 789l18 5M435 787l-14 23" stroke="#999" fill="none" strokeWidth=".7" />
      <path d="M426 782l25 13" stroke="#258a35" strokeWidth="2" />
      <path d="M446 790l8 9-12-3z" fill="#1a7a2a" />
      <path d="M417 796l-9 13" stroke="#b43030" />
      <path d="M406 804l4 2-5 6z" fill="#b22" />
      <path d="M423 780l-8 9" stroke="#2a4fd8" strokeWidth="2" />
      <circle cx="423" cy="780" r="3" fill="#fff" />
      <circle cx="417" cy="788" r="2" fill="#2a2ad8" />
      <path d="M411 788h6l-6 7h6" fill="none" stroke="#34c" />
      <g fontSize="11">
        <text x="399" y="819" fill="#c33">X</text>
        <text x="456" y="806" fill="#298a3a">Y</text>
      </g>
    </Scene>
  );
}

/* Ribbon content */

const tabs = ['主页', '曲线', '曲面', '分析', '视图', '渲染', '工具', 'PMI', '应用模块', '开发人员'];

function Small({ icon, children, size, pressed }) {
  return (
    <SmallButton type="button" $pressed={pressed}>
      <Icon name={icon} size={size} />
      {children}
    </SmallButton>
  );
}

function Big({ icon, children, w }) {
  return (
    <BigButton type="button" $w={w}>
      <Icon name={icon} size={32} />
      {children}
    </BigButton>
  );
}

function More({ icon }) {
  return (
    <BigButton type="button" $w={38} $gap={3}>
      <MoreFrame><Icon name={icon} size={24} /></MoreFrame>
      更多
      <Caret />
    </BigButton>
  );
}

function RibbonGroup({ title, w, left, gap, children }) {
  return (
    <Group $w={w}>
      <GroupBody $left={left} $gap={gap}>{children}</GroupBody>
      {title && (
        <GroupFooter>
          <GroupTitle>{title}</GroupTitle>
          <Caret $color="#444" />
        </GroupFooter>
      )}
    </Group>
  );
}

function RibbonBar() {
  return (
    <Ribbon>
      <RibbonGroup title="设计" w={240}>
        <Big icon="modeling">建模</Big>
        <Big icon="drafting">制图</Big>
        <Big icon="sheet">钣金</Big>
        <SmallList $left={5}>
          <Small icon="styling">外观造型设计</Small>
          <Small icon="assembly">装配</Small>
          <Small icon="pmi" pressed>PMI</Small>
        </SmallList>
      </RibbonGroup>
      <RibbonGroup title="加工" w={98} left={6} gap={8}>
        <Big icon="machining">加工</Big>
        <More icon="moreRed" />
      </RibbonGroup>
      <RibbonGroup title="仿真" w={67} left={7}>
        <SmallList>
          <Small icon="simAdvanced">高级</Small>
          <Small icon="simDesign">设计</Small>
          <Small icon="simMotion">运动</Small>
        </SmallList>
      </RibbonGroup>
      <RibbonGroup title="管线布置" w={110} left={7} gap={8}>
        <SmallList>
          <Small icon="electric">电气</Small>
          <Small icon="mechanical">机械</Small>
          <Small icon="logic">逻辑</Small>
        </SmallList>
        <More icon="moreRoute" />
      </RibbonGroup>
      <RibbonGroup title="特定于工艺" w={137} left={8} gap={4}>
        <Big icon="mold">注塑模</Big>
        <SmallList>
          <Small icon="progressive">级进模</Small>
          <Small icon="electrode">电极设计</Small>
          <Small icon="engDie">工程模</Small>
        </SmallList>
      </RibbonGroup>
      <RibbonGroup title="汽车" w={290} left={8} gap={4}>
        <Big icon="car" w={52}>车辆设计自动化</Big>
        <SmallList $wide>
          <Small icon="omnicad" size={24}>OmniCAD for NX</Small>
          <Small icon="dieEng" size={24}>冲模工程</Small>
        </SmallList>
        <SmallList $wide>
          <Small icon="dieDesign" size={24}>冲模设计</Small>
          <Small icon="dieCheck" size={24}>冲模验证</Small>
        </SmallList>
      </RibbonGroup>
      <RibbonGroup w={42} left={1}>
        <More icon="moreGrid" />
      </RibbonGroup>
      <CornerCaret><Caret /></CornerCaret>
    </Ribbon>
  );
}

// name, or [name, true] for a tool that is switched on; 'v' is a menu arrow and '|' a rule
const selectionTools = [
  'find', 'filterReset', 'filterPick', 'v', 'pointGray', 'handGray', 'marquee', 'v',
  'shaded', 'cube', ['snapAll', true], ['snapEnd', true], ['snapMid', true], 'snapTangent',
  ['snapPole', true], 'snapCross', ['snapCenter', true], 'snapQuad', ['snapPoint', true],
  ['snapCurve', true], 'snapFace', 'snapGrid', '|', 'zoomFit', 'pan', 'rotate', 'fit', 'v',
  'orient', 'v', 'box', 'v', 'section', 'v', '|',
];

function SelectionTools() {
  return selectionTools.map((tool, i) => {
    if (tool === '|') return <Rule key={i} />;
    if (tool === 'v') {
      return <ToolCell key={i} type="button" $w={12} aria-label="展开"><Caret /></ToolCell>;
    }
    const [name, on] = Array.isArray(tool) ? tool : [tool, false];
    return (
      <ToolCell key={i} type="button" aria-label={name} aria-pressed={on}>
        <ToolFrame $on={on}><Icon name={name} size={16} /></ToolFrame>
      </ToolCell>
    );
  });
}

/* Part navigator */

const nodes = [
  { text: '历史记录模式', icon: 'clock', first: true },
  { text: '模型视图', icon: 'views', expand: '+' },
  { text: '摄像机', icon: 'camera', expand: '+', ticked: true },
  { text: '用户表达式', icon: 'folderEq' },
  { text: '模型历史记录', icon: 'folder', expand: '-', last: true },
  { text: '基准坐标系 (0)', icon: 'csys', child: true },
  { text: '圆柱 (1)', icon: 'cylinder', child: true },
  { text: '圆柱 (2)', icon: 'cylinder', child: true },
  { text: '草图 (3) "SKETCH_000"', icon: 'sketch', child: true },
  { text: '样条 (4)', icon: 'spline', child: true },
  { text: '管道 (5)', icon: 'tube', child: true, last: true, bold: true },
];
const emptyRows = 15;

function Guide({ node }) {
  const x = node.child ? 28 : 9;
  const width = node.child ? 36 : 18;
  return (
    <Svg width={width} height="20" fill="none" aria-hidden="true">
      <path
        d={`M${x + 0.5} ${node.first ? 10 : 0}V${node.last ? 10 : 20}M${x} 10.5H${width}`}
        stroke="#999"
        strokeDasharray="1 1"
      />
      {node.expand && (
        <>
          <rect x="4.5" y="5.5" width="8" height="8" rx="1" fill="#fff" stroke="#888" />
          <path d={node.expand === '+' ? 'M6 9.5h5M8.5 7v5' : 'M6 9.5h5'} stroke="#222" />
        </>
      )}
    </Svg>
  );
}

function PartNavigator() {
  const [hidden, setHidden] = useState([]);
  const toggle = (text) =>
    setHidden(hidden.includes(text) ? hidden.filter((t) => t !== text) : [...hidden, text]);

  return (
    <Navigator>
      <GripBar>
        <Grip />
        <CollapseCaret />
        <PlainButton type="button" aria-label="关闭"><Icon name="close" size={8} /></PlainButton>
      </GripBar>
      <TreeFrame>
        <TreeClip>
          <TreeTable>
            <thead>
              <tr>
                <th>名称<SortMark /></th>
                <th>最新</th>
              </tr>
            </thead>
            <tbody>
              {nodes.map((node) => (
                <tr key={node.text}>
                  <td>
                    <NodeLine $bold={node.bold}>
                      <Guide node={node} />
                      {node.child && (
                        <TickFrame>
                          <NodeCheck
                            type="checkbox"
                            checked={!hidden.includes(node.text)}
                            onChange={() => toggle(node.text)}
                          />
                          {!hidden.includes(node.text) && <Tick><Icon name="check" size={10} /></Tick>}
                        </TickFrame>
                      )}
                      {node.ticked && <TickFrame><Icon name="check" size={12} /></TickFrame>}
                      <Icon name={node.icon} size={16} />
                      <NodeText>{node.text}</NodeText>
                    </NodeLine>
                  </td>
                  <td>{node.child && <Icon name="check" size={13} />}</td>
                </tr>
              ))}
              {Array.from({ length: emptyRows }, (_, i) => (
                <tr key={i}>
                  <td />
                  <td />
                </tr>
              ))}
            </tbody>
          </TreeTable>
        </TreeClip>
        <ScrollRow>
          <ScrollArrow type="button" aria-label="向左"><Icon name="arrowLeft" size={8} /></ScrollArrow>
          <ScrollTrack><ScrollThumb><Icon name="thumbGrip" size={8} /></ScrollThumb></ScrollTrack>
          <ScrollArrow type="button" aria-label="向右"><Icon name="arrowRight" size={8} /></ScrollArrow>
        </ScrollRow>
      </TreeFrame>
      <Splitter><SplitterGrip /></Splitter>
      {['相依性', '细节', '预览'].map((title) => (
        <Section key={title} type="button">
          {title}
          <SectionArrow><Icon name="down" size={16} /></SectionArrow>
        </Section>
      ))}
    </Navigator>
  );
}

const leftTools = ['surface', 'sphere', 'sweep', 'plane', 'datum', 'trim', 'block', 'pattern', 'cylinderBig'];

const resources = [
  { icon: 'navAssembly' },
  { icon: 'constraint' },
  { icon: 'books' },
  { icon: 'info', apart: true },
  { icon: 'page', apart: true, active: true },
  { icon: 'clock', apart: true },
  { icon: 'spectrum' },
  { icon: 'process' },
  { icon: 'robot' },
  { icon: 'gallery' },
  { icon: 'form' },
];

function WatermarkLogo() {
  return (
    <Svg width="72" height="82" viewBox="0 0 72 82" aria-hidden="true">
      <g stroke="#e6f4fb" strokeWidth="1" opacity=".9">
        <path d="M36 0L0 20c14-6 26-3 38 3l16 9c2-10 0-18-3-24z" fill="#c9e6f4" />
        <path d="M51 8l21 12v26c-5 9-12 12-20 16l2-30c1-9 0-17-3-24z" fill="#79c8f0" />
        <path d="M72 34v28L36 82c-8-4-15-12-18-22l18 4c16 0 30-12 36-30z" fill="#5bb8e8" />
        <path d="M36 82L0 62V48c2-7 7-13 16-18v22c0 12 8 24 20 30z" fill="#74c2ec" />
        <path d="M0 50V20c12-8 24-6 36-2L16 30C8 36 2 42 0 50z" fill="#a5d8f1" />
      </g>
      <path d="M36 18l20 11v24L36 65 16 53V29z" fill="#e8eff2" />
      <path d="M36 22l16 9-16 9-16-9z" fill="#a6d9f2" />
      <path d="M20 32l16 9v19l-16-9z" fill="#85c9ec" />
      <path d="M52 32l-16 9v19l16-9z" fill="#5fb5e2" />
    </Svg>
  );
}

function App() {
  const [activeTab, setActiveTab] = useState('应用模块');
  const [query, setQuery] = useState('管道');

  return (
    <Page>
      <GlobalStyle />
      <SharedDefs />
      <TopArea>
        <TitleBar>
          <QuickAccess>
            <Slot type="button" aria-label="NX"><Icon name="logo" /></Slot>
            <Slot type="button" $w={26} aria-label="保存"><Icon name="save" /></Slot>
            <DarkRule />
            <Slot type="button" aria-label="撤销"><Icon name="undo" /></Slot>
            <Slot type="button" $w={14} aria-label="撤销列表"><Caret $color="#aaa" /></Slot>
            <Slot type="button" aria-label="重做"><Icon name="redo" /></Slot>
            <DarkRule />
            <Slot type="button" aria-label="剪切"><Icon name="cut" /></Slot>
            <Slot type="button" $w={26} aria-label="复制"><Icon name="copy" /></Slot>
            <Slot type="button" aria-label="粘贴"><Icon name="paste" /></Slot>
            <DarkRule />
            <Slot type="button" aria-label="命令"><Icon name="palette" /></Slot>
            <Slot type="button" $w={14} aria-label="命令列表"><Caret $color="#ccc" /></Slot>
            <DarkRule />
            <Slot type="button" aria-label="触控"><Icon name="touch" /></Slot>
            <DarkRule />
            <WindowMenu type="button">
              <Icon name="windows" />窗口<Caret $color="#ccc" /><Caret $color="#ccc" />
            </WindowMenu>
          </QuickAccess>
          <AppTitle>NX 10 - 建模 - [_model1.prt （修改的 ）]</AppTitle>
          <TitleRight>
            <Brand>SIEMENS</Brand>
            <WindowButton type="button" aria-label="最小化"><Icon name="minimize" size={15} /></WindowButton>
            <WindowButton type="button" aria-label="还原"><Icon name="restore" size={15} /></WindowButton>
            <WindowButton type="button" aria-label="关闭"><Icon name="close" size={15} /></WindowButton>
          </TitleRight>
        </TitleBar>
        <TabBar>
          <FileTab type="button">文件(F)</FileTab>
          {tabs.map((tab) => (
            <Tab key={tab} type="button" $active={tab === activeTab} onClick={() => setActiveTab(tab)}>
              {tab}
            </Tab>
          ))}
          <TabTools>
            <SearchBox>
              <SearchInput aria-label="查找命令" value={query} onChange={(e) => setQuery(e.target.value)} />
              <Icon name="search" />
            </SearchBox>
            <Slot type="button" $w={26} aria-label="全屏"><Icon name="fullscreen" /></Slot>
            <Slot type="button" $w={26} aria-label="收起"><Icon name="chevron" /></Slot>
            <Slot type="button" aria-label="帮助"><Icon name="help" size={14} /></Slot>
            <DocButton type="button" aria-label="最小化文档"><Icon name="minimize" size={12} /></DocButton>
            <DocButton type="button" aria-label="还原文档"><Icon name="restore" size={12} /></DocButton>
            <DocButton type="button" aria-label="关闭文档"><Icon name="close" size={12} /></DocButton>
          </TabTools>
        </TabBar>
      </TopArea>
      <RibbonBar />
      <SelectionBar>
        <MenuButton type="button">
          <Icon name="menu" />
          <span>菜单(<u>M</u>)</span>
          <Caret />
        </MenuButton>
        <MenuRule />
        <SelectFrame $w={147} $right={9}>
          <FilterSelect aria-label="类型过滤器"><option>没有选择过滤器</option></FilterSelect>
          <SelectArrow><Icon name="dropDown" size={12} /></SelectArrow>
        </SelectFrame>
        <SelectFrame $w={155} $right={3}>
          <FilterSelect aria-label="选择范围"><option>整个装配</option></FilterSelect>
          <SelectArrow><Icon name="dropDown" size={12} /></SelectArrow>
        </SelectFrame>
        <SelectionTools />
        <CornerCaret><Caret /></CornerCaret>
      </SelectionBar>
      <WorkArea>
        <LeftTools>
          {leftTools.map((name) => (
            <LeftTool key={name} type="button" aria-label={name}><Icon name={name} size={24} /></LeftTool>
          ))}
          <ToolEnd />
          <CollapseMark type="button" aria-label="收起"><Icon name="arrowLeft" size={8} /></CollapseMark>
        </LeftTools>
        <PartNavigator />
        <Viewport><ModelScene /></Viewport>
        <ResourceBar>
          <GearButton type="button" aria-label="设置"><Icon name="gear" size={15} /></GearButton>
          {resources.map((r) => (
            <ResourceTab key={r.icon} type="button" aria-label={r.icon} $apart={r.apart} $active={r.active}>
              <Icon name={r.icon} size={22} />
            </ResourceTab>
          ))}
        </ResourceBar>
      </WorkArea>
      <StatusBar>
        <StatusText>选择对象并使用 MB3，或者双击某一对象</StatusText>
        <Rule $gap={0} />
        <StatusRight>
          <Rule $gap={8} />
          <Rule $gap={1} />
          <Icon name="hex" />
          <Icon name="fullscreenDark" />
          <EndRule />
        </StatusRight>
      </StatusBar>
      <Watermark>
        <WatermarkLogo />
        <div>
          <WatermarkName><WatermarkDigits>3D</WatermarkDigits>世界网</WatermarkName>
          <WatermarkUrl>WWW.3DSJW.COM</WatermarkUrl>
        </div>
      </Watermark>
    </Page>
  );
}

export default App;
